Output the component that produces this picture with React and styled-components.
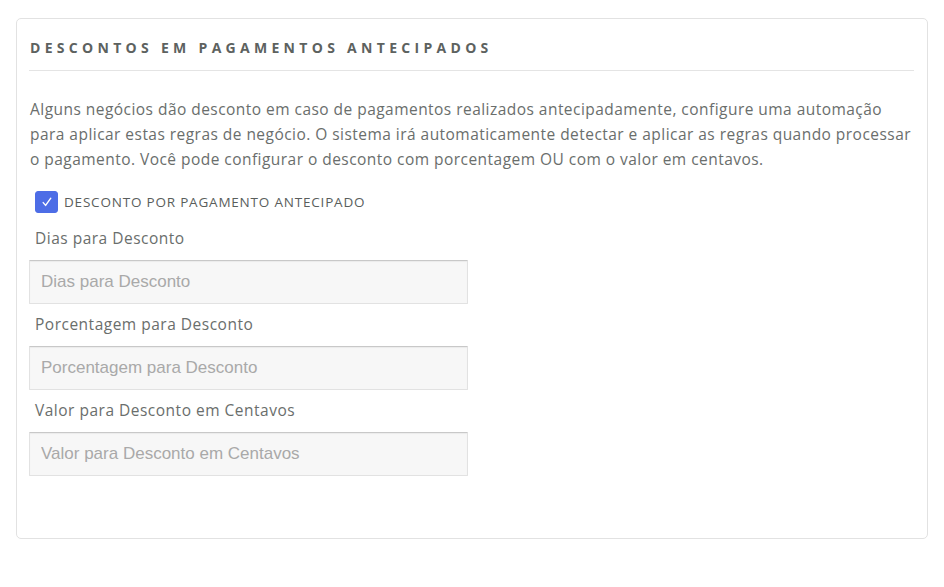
import React from 'react'
import styled, { createGlobalStyle } from 'styled-components'

const GlobalStyle = createGlobalStyle`
  html, body {
    margin: 0;
    padding: 0;
    background: #fff;
    font-family: 'Open Sans', 'Lato', sans-serif;
  }
`;

const Page = styled.div`
  padding: 18px 16px 48px 16px;
`;

const Card = styled.section`
  border: 1px solid #e2e2e2;
  border-radius: 5px;
  background: #fff;
  padding: 20px 13px 53px 12px;
`;

const Title = styled.h3`
  margin: 0;
  padding: 0 0 13px 1px;
  border-bottom: 1px solid #e4e4e4;
  font-size: 14px;
  font-weight: 700;
  letter-spacing: 4.3px;
  color: #5d625f;
  text-transform: uppercase;
  line-height: 18px;
`;

const Intro = styled.p`
  margin: 26px 0 19px 1px;
  font-size: 15.5px;
  letter-spacing: 0.46px;
  line-height: 25px;
  color: #6a6e6c;
  white-space: nowrap;
`;

const CheckRow = styled.label`
  display: flex;
  align-items: center;
  gap: 6px;
  padding-left: 6px;
  margin-bottom: 14px;
  font-size: 13.5px;
  letter-spacing: 0.8px;
  color: #5a5e5c;
  cursor: pointer;
`;

const Box = styled.span`
  width: 23px;
  height: 22px;
  border-radius: 3px;
  background: ${p => (p.checked ? '#4d6de6' : '#fff')};
  border: 1px solid ${p => (p.checked ? '#4d6de6' : '#bbb')};
  box-sizing: border-box;
  display: flex;
  align-items: center;
  justify-content: center;
`;

const Field = styled.div`
  display: flex;
  flex-direction: column;
  margin-bottom: 9px;
`;

const FieldLabel = styled.label`
  padding-left: 6px;
  font-size: 15.5px;
  letter-spacing: 0.5px;
  line-height: 22px;
  color: #6a6e6c;
  margin-bottom: 11px;
`;

const Input = styled.input`
  width: 439px;
  height: 44px;
  box-sizing: border-box;
  padding: 0 11px;
  border: 1px solid #e2e2e2;
  border-top-color: #c8c8c8;
  border-radius: 1px;
  background: #f7f7f7;
  box-shadow: inset 0 1px 1px rgba(0, 0, 0, 0.05);
  font-family: 'Liberation Sans', Arial, sans-serif;
  font-size: 17px;
  color: #444;
  outline: none;
  &::placeholder {
    color: #a9a9a9;
  }
`;

const fields = [
  'Dias para Desconto',
  'Porcentagem para Desconto',
  'Valor para Desconto em Centavos',
];

const App = () => {
  const [checked, setChecked] = React.useState(true)

  return (
    <Page>
      <GlobalStyle />
      <Card>
        <Title>Descontos em Pagamentos Antecipados</Title>
        <Intro>
          Alguns negócios dão desconto em caso de pagamentos realizados antecipadamente, configure uma automação<br />
          para aplicar estas regras de negócio. O sistema irá automaticamente detectar e aplicar as regras quando processar<br />
          o pagamento. Você pode configurar o desconto com porcentagem OU com o valor em centavos.
        </Intro>
        <CheckRow onClick={() => setChecked(!checked)}>
          <Box checked={checked}>
            {checked && (
              <svg width="12" height="12" viewBox="0 0 12 12">
                <path d="M2.2 6.6 L4.6 9.4 L9.8 2.2" fill="none" stroke="#fff" strokeWidth="1.4" strokeLinecap="round" strokeLinejoin="round" />
              </svg>
            )}
          </Box>
          DESCONTO POR PAGAMENTO ANTECIPADO
        </CheckRow>
        {fields.map(f => (
          <Field key={f}>
            <FieldLabel>{f}</FieldLabel>
            <Input type="text" placeholder={f} />
          </Field>
        ))}
      </Card>
    </Page>
  )
}

export default App
